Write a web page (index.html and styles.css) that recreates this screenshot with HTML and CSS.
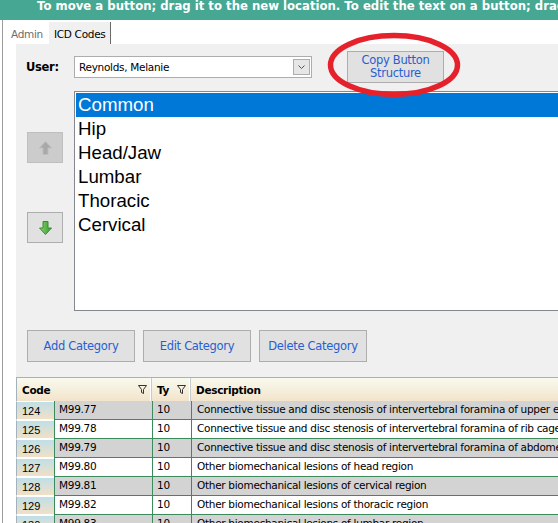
FILE: index.html
```html
<!DOCTYPE html>
<html lang="en">
<head>
    <meta charset="UTF-8">
    <meta name="viewport" content="width=device-width, initial-scale=1.0">
    <title>ICD Codes</title>
    <link rel="stylesheet" href="styles.css">
</head>
<body>
    <div class="banner">To move a button; drag it to the new location. To edit the text on a button; drag it onto the edit box.</div>

    <div class="window">
        <!-- tabs -->
        <div class="tabs">
            <span class="tab">Admin</span>
            <span class="tab active">ICD Codes</span>
        </div>

        <div class="panel">
            <!-- user selection -->
            <div class="user-row">
                <span class="user-label">User:</span>
                <div class="combo">
                    <span>Reynolds, Melanie</span>
                    <span class="combo-arrow">
                        <svg width="15" height="14" viewBox="0 0 15 14"><polyline points="4.5,5.5 7.5,8.5 10.5,5.5" fill="none" stroke="#555" stroke-width="1"/></svg>
                    </span>
                </div>
                <div class="copy-wrap">
                    <button class="btn copy-btn">Copy Button<br>Structure</button>
                    <svg class="circle" width="136" height="68" viewBox="0 0 136 68"><ellipse cx="68" cy="34" rx="63.5" ry="29.5" fill="none" stroke="#e5222b" stroke-width="5.5"/></svg>
                </div>
            </div>

            <!-- categories -->
            <div class="list-row">
                <div class="arrows">
                    <button class="arrow-btn disabled">
                        <svg width="13" height="14" viewBox="0 0 13 14"><path d="M6.5 0.5 L12.5 7 H9 V13.5 H4 V7 H0.5 Z" fill="#a9a9a9" stroke="#bdbdbd"/></svg>
                    </button>
                    <button class="arrow-btn">
                        <svg width="13" height="14" viewBox="0 0 13 14">
                            <defs><linearGradient id="g" x1="0" y1="0" x2="1" y2="0"><stop offset="0" stop-color="#8fd66a"/><stop offset="1" stop-color="#2f9a2f"/></linearGradient></defs>
                            <path d="M4 0.5 H9 V7 H12.5 L6.5 13.5 L0.5 7 H4 Z" fill="url(#g)" stroke="#3b8a35"/>
                        </svg>
                    </button>
                </div>
                <div class="listbox">
                    <div class="item selected">Common</div>
                    <div class="item">Hip</div>
                    <div class="item">Head/Jaw</div>
                    <div class="item">Lumbar</div>
                    <div class="item">Thoracic</div>
                    <div class="item">Cervical</div>
                </div>
            </div>

            <div class="buttons">
                <button class="btn">Add Category</button>
                <button class="btn">Edit Category</button>
                <button class="btn">Delete Category</button>
            </div>

            <!-- codes grid -->
            <div class="grid">
                <div class="ghead">
                    <div class="hc">Code <svg width="9" height="9" viewBox="0 0 9 9"><path d="M0.5 0.5 H8.5 L5.5 4.5 V8.5 L3.5 7.5 V4.5 Z" fill="none" stroke="#333"/></svg></div>
                    <div class="hc">Ty <svg width="9" height="9" viewBox="0 0 9 9"><path d="M0.5 0.5 H8.5 L5.5 4.5 V8.5 L3.5 7.5 V4.5 Z" fill="none" stroke="#333"/></svg></div>
                    <div class="hc">Description</div>
                </div>
                <div class="rows">
                    <div class="row"><span class="num">124</span><span>M99.77</span><span>10</span><span class="desc">Connective tissue and disc stenosis of intervertebral foramina of upper extremity</span></div>
                    <div class="row"><span class="num">125</span><span>M99.78</span><span>10</span><span class="desc">Connective tissue and disc stenosis of intervertebral foramina of rib cage</span></div>
                    <div class="row"><span class="num">126</span><span>M99.79</span><span>10</span><span class="desc">Connective tissue and disc stenosis of intervertebral foramina of abdomen and other regions</span></div>
                    <div class="row"><span class="num">127</span><span>M99.80</span><span>10</span><span class="desc">Other biomechanical lesions of head region</span></div>
                    <div class="row"><span class="num">128</span><span>M99.81</span><span>10</span><span class="desc">Other biomechanical lesions of cervical region</span></div>
                    <div class="row"><span class="num">129</span><span>M99.82</span><span>10</span><span class="desc">Other biomechanical lesions of thoracic region</span></div>
                    <div class="row"><span class="num">130</span><span>M99.83</span><span>10</span><span class="desc">Other biomechanical lesions of lumbar region</span></div>
                </div>
            </div>
        </div>
    </div>
</body>
</html>
```

FILE: styles.css
```css
body {
    margin: 0;
    width: 558px;
    height: 523px;
    overflow: hidden;
    background: #fff;
    font-family: "DejaVu Sans", sans-serif;
    font-size: 10.5px;
    letter-spacing: -0.3px;
    color: #000;
}
.banner {
    height: 20px;
    padding-left: 37px;
    background: #46a792;
    color: #fff;
    font-weight: bold;
    font-size: 11.7px;
    letter-spacing: 0;
    line-height: 12px;
    white-space: nowrap;
    overflow: hidden;
}
.window {
    margin-left: 2px;
    border-left: 1px solid #9c9c9c;
    height: 503px;
    overflow: hidden;
}
.tabs {
    height: 24px;
    padding-left: 3px;
    display: flex;
    align-items: flex-end;
}
.tab {
    height: 22px;
    box-sizing: border-box;
    padding: 2px 6px 0 5px;
    line-height: 20px;
    color: #6d6d6d;
}
.tab.active {
    background: #f0f0f0;
    border-right: 1px solid #6a6a6a;
    color: #000;
    padding-right: 5px;
}
.panel {
    margin-left: 13px;
    height: 479px;
    box-sizing: border-box;
    padding-top: 7px;
    background: #f0f0f0;
}
.user-row {
    display: flex;
    align-items: center;
    height: 32px;
}
.user-label {
    width: 48px;
    padding-left: 10px;
    font-weight: bold;
    font-size: 11.5px;
}
.combo {
    width: 238px;
    height: 22px;
    box-sizing: border-box;
    border: 1px solid #adadad;
    background: #fff;
    padding: 0 1px 0 4px;
    display: flex;
    align-items: center;
    justify-content: space-between;
}
.combo-arrow {
    width: 17px;
    height: 16px;
    box-sizing: border-box;
    border: 1px solid #adadad;
    background: #e6e6e6;
    display: flex;
    align-items: center;
    justify-content: center;
}
.copy-wrap {
    position: relative;
    margin-left: 35px;
}
.btn {
    width: 108px;
    height: 32px;
    border: 1px solid #adadad;
    background: #e1e1e1;
    color: #2660d0;
    font-family: "DejaVu Sans", sans-serif;
    font-size: 11.5px;
    letter-spacing: -0.3px;
    padding: 0;
    margin: 0;
}
.copy-btn {
    display: block;
    width: 97px;
    line-height: 13.4px;
}
.circle {
    position: absolute;
    left: -21px;
    top: -20px;
}
.list-row {
    display: flex;
    margin-top: 8px;
}
.arrows {
    flex: none;
    width: 36px;
    margin: 0 11px;
    padding-top: 41px;
    display: flex;
    flex-direction: column;
    gap: 49px;
}
.arrow-btn {
    height: 31px;
    padding: 0;
    border: 1px solid #adadad;
    background: #e1e1e1;
    display: flex;
    align-items: center;
    justify-content: center;
}
.arrow-btn.disabled {
    background: #cccccc;
    border-color: #bfbfbf;
}
.listbox {
    flex: none;
    width: 520px;
    height: 220px;
    box-sizing: border-box;
    border: 1px solid #828790;
    padding: 1px;
    background: #fff;
    font-family: "Liberation Sans", Arial, sans-serif;
    font-size: 18.7px;
    letter-spacing: 0;
}
.item {
    height: 24px;
    line-height: 24px;
    padding-left: 2px;
}
.item.selected {
    background: #0078d7;
    color: #fff;
}
.buttons {
    display: flex;
    gap: 8px;
    margin: 19px 0 0 11px;
}
.grid {
    margin-top: 15px;
    width: 560px;
}
.ghead {
    display: grid;
    grid-template-columns: 135px 39px 1fr;
    height: 24px;
    box-sizing: border-box;
    border-top: 1px solid #a3b2bd;
    border-left: 1px solid #a3b2bd;
    background: linear-gradient(#f8faee, #f3e4cb);
    font-weight: bold;
}
.hc {
    display: flex;
    align-items: center;
    justify-content: space-between;
    padding: 0 4px 0 5px;
    border-right: 1px solid #c4ccd2;
    box-shadow: inset -1px 0 0 #fff;
}
.row {
    display: grid;
    grid-template-columns: 38px 98px 39px 1fr;
    height: 19px;
}
.rows .row:nth-child(odd) {
    background: #d3d3d3;
}
.rows .row:nth-child(even) {
    background: #fff;
}
.row span {
    border-left: 1px solid #3c8b5d;
    border-bottom: 1px solid #3c8b5d;
    padding-left: 4px;
    line-height: 16px;
    white-space: nowrap;
    overflow: hidden;
}
.row .desc {
    padding-left: 5px;
}
.row .num {
    border-left: 1px solid #a3b2bd;
    border-bottom: 1px solid #fff;
    border-top: 1px solid #fff;
    padding: 2px 0 0 5px;
    background: linear-gradient(#bfdfe7, #f1e0c6);
    font-family: "Liberation Sans", Arial, sans-serif;
    font-size: 11px;
    letter-spacing: 0;
    line-height: 15px;
}
```
